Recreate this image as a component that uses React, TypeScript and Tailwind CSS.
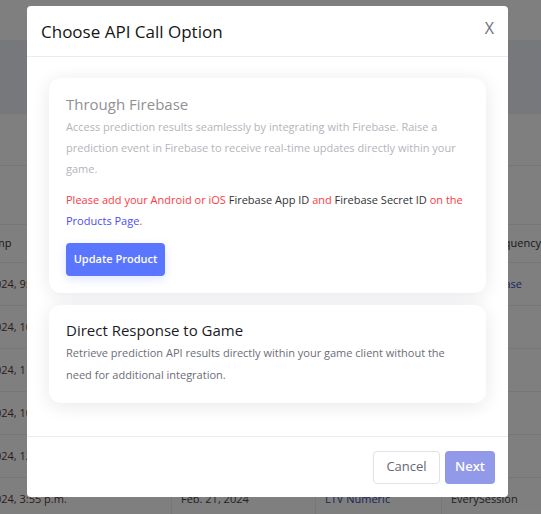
const font = { fontFamily: '"Open Sans", "Noto Sans", sans-serif' };

function TableBackdrop() {
  const rows = [
    { t: "Feb. 21, 2024, 9:12 a.m.", d: "Feb. 21, 2024", e: "LTV Numeric", f: "OnlyPurchase", blue: true },
    { t: "Feb. 21, 2024, 10:41 a.m.", d: "Feb. 21, 2024", e: "LTV Numeric", f: "Once" },
    { t: "Feb. 21, 2024, 11:05 a.m.", d: "Feb. 21, 2024", e: "LTV Numeric", f: "Once" },
    { t: "Feb. 21, 2024, 10:58 a.m.", d: "Feb. 21, 2024", e: "LTV Numeric", f: "Once" },
    { t: "Feb. 21, 2024, 12:20 p.m.", d: "Feb. 21, 2024", e: "LTV Numeric", f: "Once" },
    { t: "Feb. 21, 2024, 3:55 p.m.", d: "Feb. 21, 2024", e: "LTV Numeric", f: "EverySession" },
  ];
  return (
    <div className="flex flex-col text-[11px] text-[#444]">
      <div className="h-[40px]" />
      <div className="h-[74px] bg-[#eff0f6]" />
      <div className="h-[52px] border-b border-[#eeeeee]" />
      <div className="h-[59px] border-b border-[#eeeeee]" />
      <div className="flex h-[38px] items-center border-b border-[#eeeeee] ml-[-70px] font-medium text-[#333] whitespace-nowrap">
        <div className="w-[241px] pl-[24px]">Timestamp</div>
        <div className="w-[144px] pl-[9px]">Date</div>
        <div className="w-[126px] pl-[9px]">Event</div>
        <div className="flex-1 pl-[21px]">Event frequency</div>
      </div>
      {rows.map((r, i) => (
        <div key={i} className="flex h-[43px] items-center border-b border-[#eeeeee] ml-[-70px] whitespace-nowrap">
          <div className="w-[241px] h-full flex items-center pl-[16px] text-[#5a3a32]">{r.t}</div>
          <div className="w-[144px] h-full flex items-center pl-[9px] border-l border-[#eeeeee]">{r.d}</div>
          <div className="w-[126px] h-full flex items-center pl-[9px] border-l border-[#eeeeee] text-[#3b4bb0]">{r.e}</div>
          <div className={`flex-1 h-full flex items-center pl-[9px] border-l border-[#eeeeee] ${r.blue ? "text-[#3b4bb0]" : ""}`}>
            {r.f}
          </div>
        </div>
      ))}
    </div>
  );
}

export default function App() {
  return (
    <div className="relative w-[541px] h-[514px] overflow-hidden bg-white" style={font}>
      <TableBackdrop />
      <div className="absolute inset-0 bg-black/50" />

      <div className="absolute left-[27px] top-[6px] w-[481px] h-[491px] bg-white rounded-[4px] flex flex-col">
        <div className="h-[51px] shrink-0 flex items-center justify-between border-b border-[#e9ebef] pl-[14px] pr-[14px]">
          <h2 className="text-[17px] text-[#151515] leading-none">Choose API Call Option</h2>
          <button className="text-[16px] text-[#6b6f80] leading-none -mt-[6px]">X</button>
        </div>

        <div className="flex-1 flex flex-col gap-[12px] pt-[21px] px-[22px]">
          <div className="rounded-[12px] bg-white shadow-[0_3px_18px_rgba(30,30,60,0.10)] px-[17px] pt-[14px] pb-[17px]">
            <h3 className="text-[15px] leading-[24px] text-[#909095]">Through Firebase</h3>
            <p className="text-[11px] leading-[21px] text-[#b4b4bc]">
              Access prediction results seamlessly by integrating with Firebase. Raise a prediction event in
              Firebase to receive real-time updates directly within your game.
            </p>
            <p className="mt-[10px] text-[11px] leading-[21px] text-[#ff3a44]">
              Please add your Android or iOS <span className="text-[#333]">Firebase App ID</span> and{" "}
              <span className="text-[#333]">Firebase Secret ID</span> on the{" "}
              <span className="text-[#4d4df5]">Products Page</span>.
            </p>
            <button className="mt-[12px] h-[33px] w-[99px] rounded-[4px] bg-[#5b76fe] text-white text-[11px] font-semibold shadow-[0_3px_10px_rgba(91,118,254,0.2)]">
              Update Product
            </button>
          </div>

          <div className="rounded-[12px] bg-white shadow-[0_3px_18px_rgba(30,30,60,0.10)] px-[17px] pt-[13px] pb-[17px]">
            <h3 className="text-[15px] leading-[24px] text-[#1b1b1f]">Direct Response to Game</h3>
            <p className="text-[11px] leading-[22px] text-[#6d6d78]">
              Retrieve prediction API results directly within your game client without the need for additional
              integration.
            </p>
          </div>
        </div>

        <div className="h-[61px] shrink-0 border-t border-[#e9ebef] flex items-center justify-end gap-[5px] pr-[13px]">
          <button className="h-[33px] w-[67px] rounded-[4px] border border-[#dfe2e8] text-[13px] text-[#646775]">
            Cancel
          </button>
          <button className="h-[33px] w-[50px] rounded-[4px] bg-[#9199e8] text-[13px] font-semibold text-white">
            Next
          </button>
        </div>
      </div>
    </div>
  );
}
